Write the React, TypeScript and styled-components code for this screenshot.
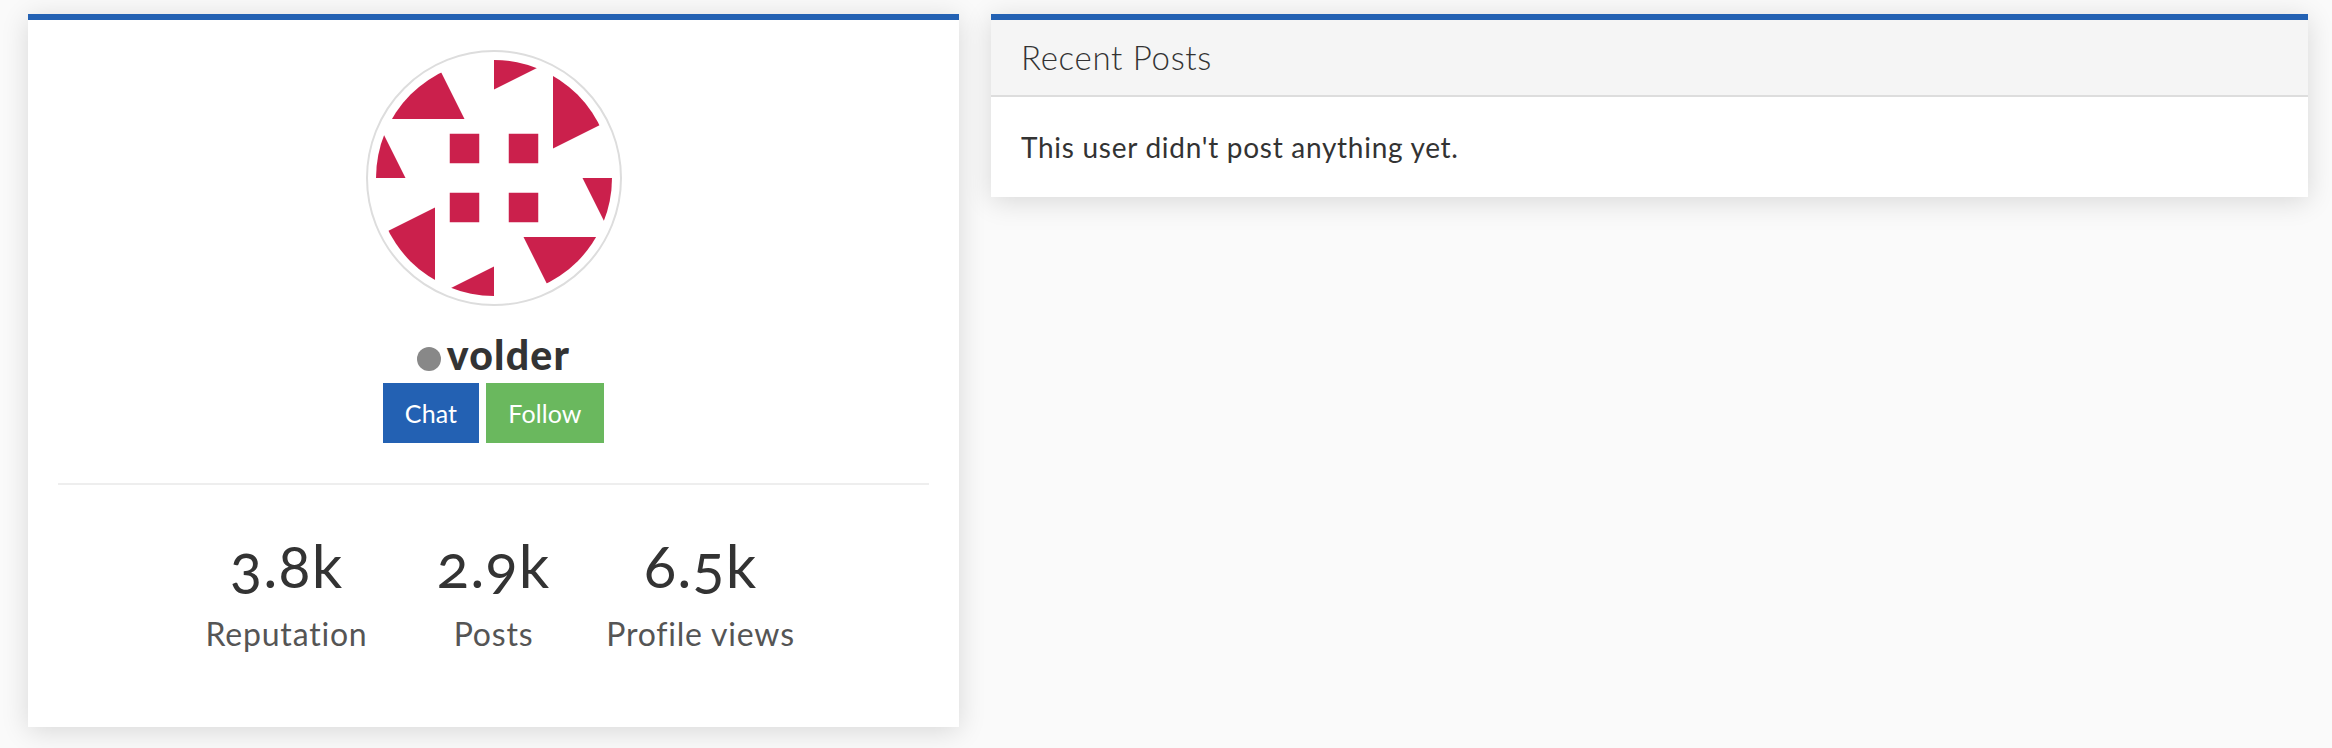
import React from "react";
import styled, { createGlobalStyle } from "styled-components";

const GlobalStyle = createGlobalStyle`
  html, body {
    margin: 0;
    padding: 0;
    background: #fafafa;
    font-family: Lato, "Open Sans", "Liberation Sans", sans-serif;
    color: #333;
  }
  * { box-sizing: border-box; }
`;

const Page = styled.div`
  display: grid;
  grid-template-columns: 931px 1317px;
  column-gap: 32px;
  align-items: start;
  width: 2332px;
  height: 748px;
  padding: 14px 0 0 28px;
  overflow: hidden;
`;

const Card = styled.section`
  background: #fff;
  border-top: 6px solid #2361b3;
  box-shadow: 0 4px 26px rgba(0, 0, 0, 0.14);
`;

const ProfileBody = styled.div`
  display: flex;
  flex-direction: column;
  align-items: center;
  height: 707px;
  padding: 30px 30px 0;
`;

const Avatar = styled.div`
  width: 256px;
  height: 256px;
  padding: 8px;
  border: 2px solid #ddd;
  border-radius: 50%;
  svg { display: block; }
`;

const Username = styled.h1`
  display: flex;
  align-items: center;
  gap: 6px;
  height: 77px;
  margin: 0;
  padding-top: 20px;
  font-size: 41px;
  font-weight: 900;
  letter-spacing: 1.2px;
  color: #333;
`;

const StatusDot = styled.span`
  width: 24px;
  height: 24px;
  margin-top: 8px;
  border-radius: 50%;
  background: #888;
`;

const Actions = styled.div`
  display: flex;
  gap: 7px;
`;

const Button = styled.button<{ $bg: string; $w: number }>`
  width: ${(p) => p.$w}px;
  height: 60px;
  border: 0;
  padding: 0;
  background: ${(p) => p.$bg};
  color: #fff;
  font-family: inherit;
  font-size: 25px;
  font-weight: 400;
  letter-spacing: 0.1px;
`;

const Divider = styled.hr`
  align-self: stretch;
  height: 2px;
  margin: 40px 0 0;
  border: 0;
  background: #eee;
`;

const Stats = styled.div`
  display: grid;
  grid-template-columns: repeat(3, 207px);
  justify-content: center;
  margin-top: 44px;
`;

const Stat = styled.div`
  text-align: center;
`;

const StatValue = styled.div`
  font-size: 60px;
  line-height: 72px;
  font-weight: 400;
  font-variant-numeric: oldstyle-nums;
  letter-spacing: 1px;
  color: #333;
`;

const StatLabel = styled.div`
  margin-top: 11px;
  font-size: 32px;
  line-height: 44px;
  letter-spacing: 0.8px;
  color: #555;
`;

const PanelHeader = styled.div`
  height: 77px;
  padding: 0 30px 2px;
  display: flex;
  align-items: center;
  background: #f5f5f5;
  border-bottom: 2px solid #ddd;
  font-size: 33px;
  font-weight: 300;
  letter-spacing: 0.7px;
  color: #333;
`;

const PanelBody = styled.div`
  height: 100px;
  padding: 0 30px;
  display: flex;
  align-items: center;
  font-size: 28px;
  letter-spacing: 0.72px;
  color: #333;
`;

const AVATAR_RED = "#cb204c";

const identiconPaths = [
  "M59 0L88.5 59H0Z",
  "M236 59L177 88.5V0Z",
  "M177 236L147.5 177H236Z",
  "M0 177L59 147.5V236Z",
  "M118 0H177L118 29.5Z",
  "M236 118V177L206.5 118Z",
  "M118 236H59L118 206.5Z",
  "M0 118V59L29.5 118Z",
  "M73.75 73.75h29.5v29.5h-29.5Z",
  "M132.75 73.75h29.5v29.5h-29.5Z",
  "M73.75 132.75h29.5v29.5h-29.5Z",
  "M132.75 132.75h29.5v29.5h-29.5Z",
];

const Identicon = () => (
  <svg width="236" height="236" viewBox="0 0 236 236">
    <defs>
      <clipPath id="avatar-clip">
        <circle cx="118" cy="118" r="118" />
      </clipPath>
    </defs>
    <g clipPath="url(#avatar-clip)" fill={AVATAR_RED}>
      {identiconPaths.map((d) => (
        <path key={d} d={d} />
      ))}
    </g>
  </svg>
);

const stats = [
  { value: "3.8k", label: "Reputation" },
  { value: "2.9k", label: "Posts" },
  { value: "6.5k", label: "Profile views" },
];

export default function App() {
  return (
    <>
      <GlobalStyle />
      <Page>
        <Card>
          <ProfileBody>
            <Avatar>
              <Identicon />
            </Avatar>
            <Username>
              <StatusDot />
              volder
            </Username>
            <Actions>
              <Button $bg="#2361b3" $w={96}>Chat</Button>
              <Button $bg="#6ab85e" $w={118}>Follow</Button>
            </Actions>
            <Divider />
            <Stats>
              {stats.map((s) => (
                <Stat key={s.label}>
                  <StatValue>{s.value}</StatValue>
                  <StatLabel>{s.label}</StatLabel>
                </Stat>
              ))}
            </Stats>
          </ProfileBody>
        </Card>
        <Card>
          <PanelHeader>Recent Posts</PanelHeader>
          <PanelBody>This user didn't post anything yet.</PanelBody>
        </Card>
      </Page>
    </>
  );
}
